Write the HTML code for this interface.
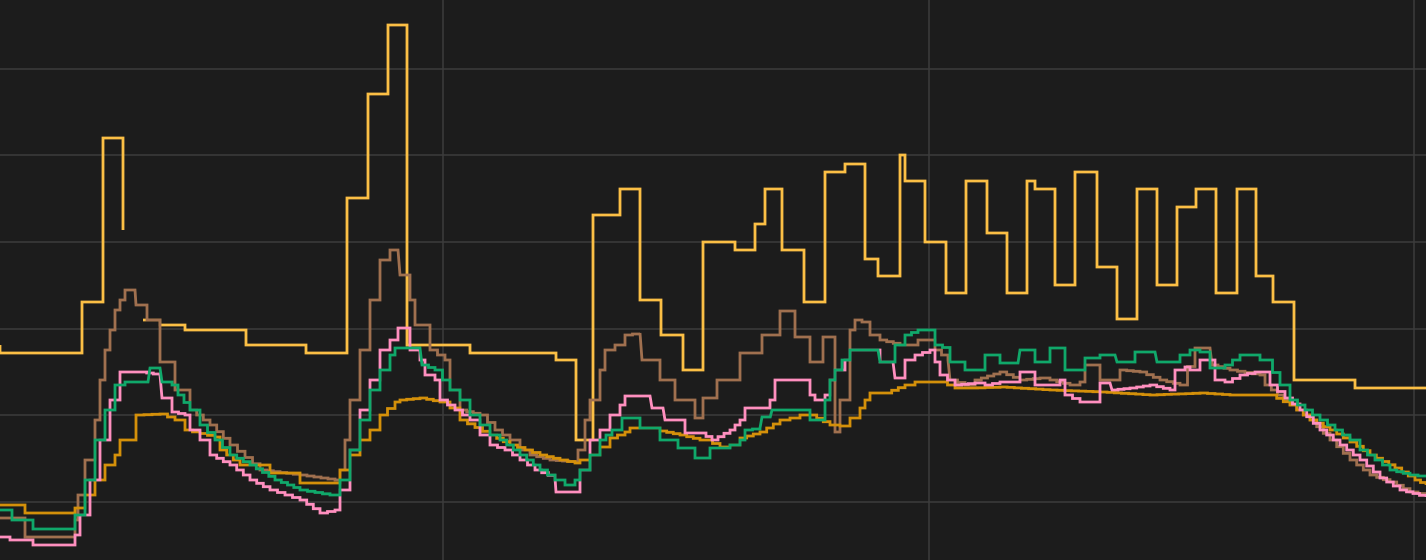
<!DOCTYPE html>
<html><head><meta charset="utf-8"><style>
html,body{margin:0;padding:0;background:#1c1c1c;width:1426px;height:560px;overflow:hidden}
svg{display:block}
polyline{fill:none;stroke-width:2.8;stroke-linejoin:miter}
</style></head><body>
<svg width="1426" height="560" viewBox="0 0 1426 560">
<rect width="1426" height="560" fill="#1c1c1c"/>
<g stroke="#3c3c3c" stroke-width="1.5">
<line x1="0" y1="69" x2="1426" y2="69"/><line x1="0" y1="155" x2="1426" y2="155"/>
<line x1="0" y1="242" x2="1426" y2="242"/><line x1="0" y1="329" x2="1426" y2="329"/>
<line x1="0" y1="415" x2="1426" y2="415"/><line x1="0" y1="502" x2="1426" y2="502"/>
<line x1="443" y1="0" x2="443" y2="560"/><line x1="929" y1="0" x2="929" y2="560"/><line x1="1414" y1="0" x2="1414" y2="560"/>
</g>
<polyline stroke="#fbbf45" points="0,345 0,353 82,353 82,302 103,302 103,138 123,138 123,230"/>
<polyline stroke="#fbbf45" points="143,320 160,320 160,325 185,325 185,330 246,330 246,345 306,345 306,353 347,353 347,198 368,198 368,94 388,94 388,25 407,25 407,345 470,345 470,353 556,353 556,360 576,360 576,440 593,440 593,215 620,215 620,189 640,189 640,300 661,300 661,335 683,335 683,370 703,370 703,242 735,242 735,250 755,250 755,224 765,224 765,189 782,189 782,250 804,250 804,302 825,302 825,172 845,172 845,164 865,164 865,259 878,259 878,276 900,276 900,155 905,155 905,181 925,181 925,242 946,242 946,293 966,293 966,181 987,181 987,233 1007,233 1007,293 1027,293 1027,181 1035,181 1035,189 1055,189 1055,285 1075,285 1075,172 1097,172 1097,267 1117,267 1117,319 1137,319 1137,189 1157,189 1157,285 1177,285 1177,207 1196,207 1196,189 1216,189 1216,293 1237,293 1237,189 1256,189 1256,276 1273,276 1273,302 1294,302 1294,380 1355,380 1355,388 1426,388"/>
<polyline class="st" stroke="#a0704f" points="0,518 25,518 25,537 70,537 75,520 78,495 85,460 95,420 100,380 105,350 110,330 115,310 120,300 125,290 135,290 136,305 147,305 147,320 160,320 160,362 175,362 175,390 190,390 190,410 210,425 230,445 260,470 300,475 335,480 340,470 345,440 350,400 360,350 370,300 380,260 390,250 398,250 400,275 410,300 415,325 430,325 430,350 445,360 450,390 460,410 480,415 495,430 510,440 520,450 530,455 550,460 575,462 578,450 585,420 590,400 600,370 605,350 615,345 625,335 640,333 642,360 660,360 660,380 675,380 675,400 695,400 695,418 703,418 703,398 717,398 717,380 740,380 740,353 762,353 762,335 780,335 780,311 795,311 795,337 810,337 810,362 823,362 823,337 830,337 835,432 840,400 850,330 855,320 862,322 870,335 880,340 900,345 915,345 918,340 930,340 935,350 948,360 950,380 965,385 975,380 1000,372 1020,380 1040,378 1050,380 1070,385 1080,382 1085,365 1095,365 1100,380 1115,380 1120,370 1140,372 1160,380 1180,385 1195,348 1210,348 1212,365 1230,370 1260,375 1265,385 1290,405 1310,420 1330,440 1350,460 1370,475 1390,482 1410,492 1426,495"/>
<polyline class="st" stroke="#d4900a" points="0,505 25,505 25,513 70,513 75,508 85,495 95,480 105,465 115,455 120,440 136,440 136,415 160,414 175,420 185,430 215,437 220,450 240,465 260,465 270,473 300,473 300,483 335,483 340,470 350,455 360,440 370,430 380,415 395,402 400,400 420,398 440,402 450,408 460,420 490,435 510,445 540,455 560,460 575,463 580,460 590,455 600,447 610,438 625,432 630,428 650,428 660,431 680,435 700,440 705,440 720,447 730,445 740,438 760,432 780,420 790,418 800,415 810,415 830,425 840,426 850,418 860,408 865,400 870,393 885,393 905,385 915,382 940,382 955,388 970,388 1000,387 1050,390 1100,392 1150,395 1200,393 1230,395 1270,395 1290,405 1310,420 1330,430 1350,442 1370,455 1395,468 1415,480 1426,485"/>
<polyline class="st" stroke="#ff8fbf" points="0,537 10,540 33,540 33,545 70,545 75,535 80,515 90,480 100,440 110,400 120,372 140,372 160,375 162,398 172,398 172,412 185,415 190,430 200,440 210,455 230,465 250,480 270,490 300,500 320,513 335,510 340,490 350,450 360,410 370,380 380,350 390,340 398,328 410,328 410,350 420,360 425,375 435,380 440,400 455,410 470,420 480,435 490,445 505,450 520,460 535,470 555,478 556,492 575,492 580,470 590,440 600,430 610,415 620,405 625,396 650,396 652,408 663,408 665,420 680,420 685,433 700,433 712,440 730,430 735,425 740,420 745,408 760,408 770,400 775,380 800,380 810,395 815,400 825,395 830,380 835,370 845,360 850,350 875,350 880,362 893,362 895,378 905,378 905,360 915,355 930,350 935,362 940,375 955,385 975,383 985,385 1000,382 1015,382 1020,372 1030,372 1035,385 1050,385 1060,380 1065,395 1080,402 1095,402 1100,383 1110,383 1112,390 1130,388 1150,385 1170,390 1175,370 1185,367 1190,370 1200,360 1210,360 1215,380 1225,382 1240,375 1255,372 1265,372 1270,385 1285,398 1300,410 1320,430 1340,445 1360,460 1380,478 1400,490 1426,497"/>
<polyline class="st" stroke="#10a86a" stroke-width="3.2" points="0,510 12,510 12,520 33,520 33,529 70,529 75,515 85,480 95,440 105,410 115,385 125,382 148,382 150,368 160,368 162,382 172,385 178,395 190,410 200,425 215,440 230,455 250,465 275,480 300,490 330,495 340,480 350,450 360,420 370,390 380,370 390,355 395,348 420,348 422,365 435,370 450,390 460,400 470,415 480,425 490,435 500,440 520,455 540,470 555,480 565,485 575,480 580,470 590,455 600,440 612,430 622,418 640,418 640,428 660,428 660,440 675,440 678,448 690,448 695,458 705,458 710,448 725,448 730,445 740,440 745,430 760,428 762,417 770,418 772,410 800,410 810,420 820,420 825,400 830,380 835,370 842,360 850,350 878,350 880,362 890,362 895,345 905,345 905,335 918,330 930,330 935,345 950,350 950,362 965,362 965,370 980,370 985,355 997,355 1000,363 1018,363 1020,350 1030,350 1035,362 1050,362 1050,348 1065,348 1065,370 1080,370 1085,358 1095,358 1100,355 1115,355 1117,362 1135,362 1135,352 1155,352 1157,362 1175,362 1180,355 1190,350 1200,352 1210,368 1220,368 1225,365 1240,355 1255,355 1260,360 1265,360 1280,385 1290,400 1305,410 1320,420 1335,430 1350,440 1360,450 1375,460 1390,470 1410,475 1426,477"/>
</svg>
<script>
document.querySelectorAll('polyline.st').forEach(function(pl){
  var p=pl.getAttribute('points').trim().split(/\s+/).map(function(s){return s.split(',').map(Number);});
  var out=[p[0]];
  for(var i=1;i<p.length;i++){
    var a=p[i-1],b=p[i],dx=b[0]-a[0],dy=b[1]-a[1];
    if(dx===0||dy===0||Math.abs(dx)<3){out.push(b);continue;}
    var n=Math.max(1,Math.round(Math.abs(dx)/7));
    for(var k=1;k<=n;k++){
      var x=a[0]+dx*k/n,yPrev=a[1]+dy*(k-1)/n,y=a[1]+dy*k/n;
      out.push([x,yPrev]);out.push([x,y]);
    }
  }
  pl.setAttribute('points',out.map(function(q){return q[0].toFixed(1)+','+q[1].toFixed(1);}).join(' '));
});
</script>
</body></html>
